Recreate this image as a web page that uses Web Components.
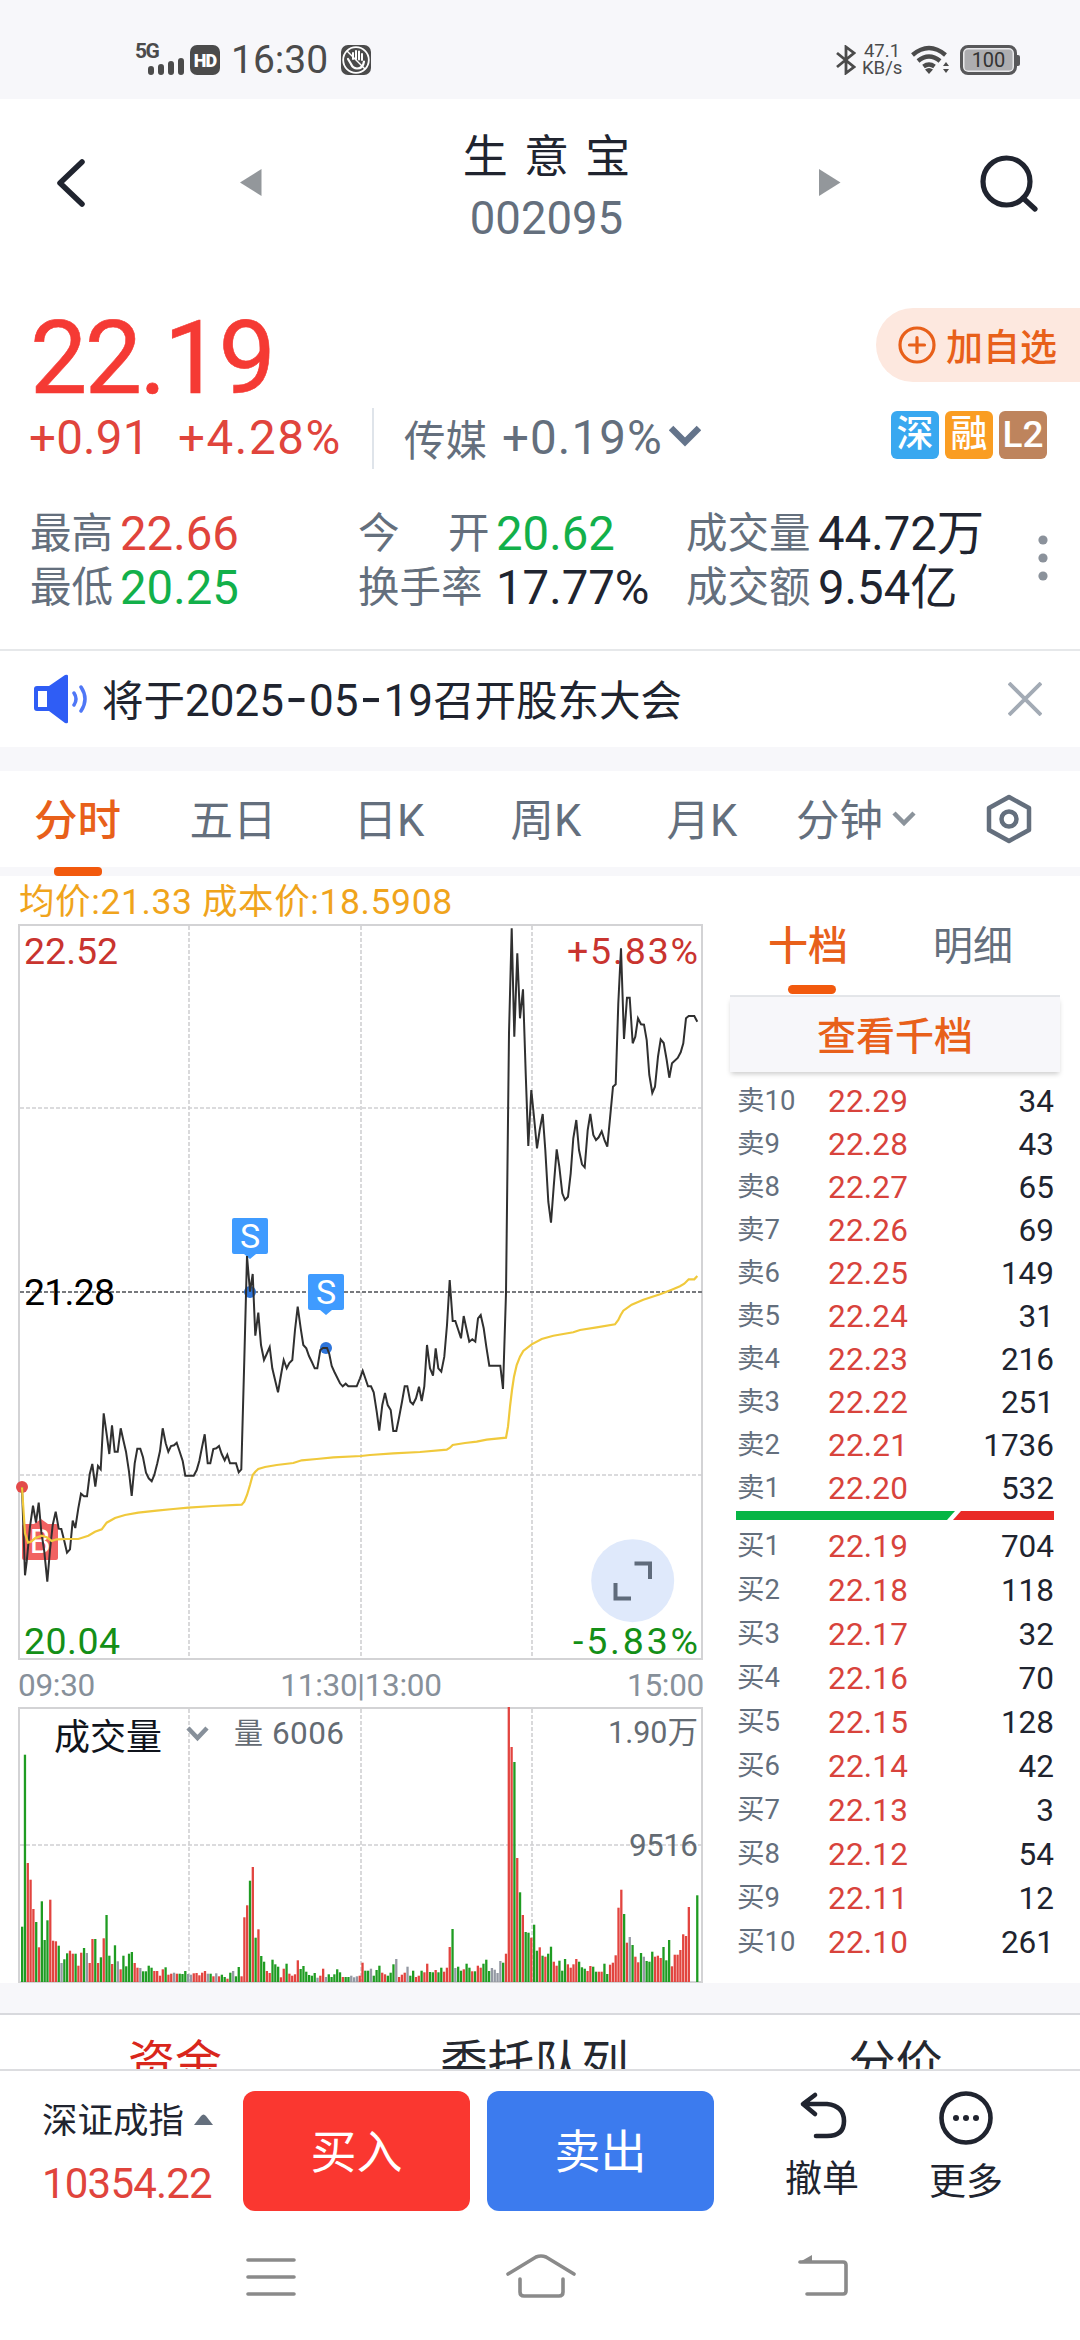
<!DOCTYPE html>
<html lang="zh-CN">
<head>
<meta charset="utf-8">
<title>生意宝 002095</title>
<style>
  body {
    margin: 0;
    width: 1080px;
    height: 2340px;
    overflow: hidden;
    background: #fff;
    font-family: Roboto, "Noto Sans CJK SC", sans-serif;
    color: #20242f;
  }
  stock-page {
    --red: #e0443c;
    --green: #12b04a;
    --orange: #e8601a;
    --gray: #646f7d;
    --band: #f7f7fa;
  }
</style>
</head>
<body>
<stock-page></stock-page>

<script>
class BaseElement extends HTMLElement {
  constructor() {
    super();
    this.attachShadow({ mode: 'open' });
  }

  connectedCallback() {
    this.shadowRoot.innerHTML = this.render();
  }
}

class StatusBar extends BaseElement {
  render() {
    return `
      <style>
        :host { display: flex; box-sizing: border-box; height: 99px; padding: 21px 60px 0 135px; align-items: center; background: var(--band); color: #4b4b4b; }
        svg { display: block; flex: none; }
        .net { width: 55px; height: 36px; }
        .net b { display: block; font-size: 21px; line-height: 18px; letter-spacing: -1.5px; }
        .net svg { margin: -3px 0 0 13px; }
        .hd { width: 30px; height: 30px; border-radius: 7px; background: #4b4b4b; color: #fff; font: 900 18px/31px Roboto; letter-spacing: -1px; text-align: center; }
        .time { margin-left: 11px; width: 97px; font-size: 39px; line-height: 40px; }
        .hand { margin-left: 13px; }
        .right { margin-left: auto; display: flex; align-items: center; }
        .rate { width: 40px; margin: 0 9px 0 6px; font-size: 18.500px; line-height: 17px; text-align: center; white-space: nowrap; }
        .battery { margin-left: 10px; width: 51px; height: 24px; border: 3px solid #58585a; border-radius: 8px; background: #adadb0; box-shadow: inset 0 0 0 1.5px #e8e8ea; color: #333; font-size: 20px; line-height: 25px; text-align: center; }
        .nub { width: 3px; height: 11px; border-radius: 0 2px 2px 0; background: #58585a; }
      </style>
      <div class="net"><b>5G</b>
        <svg width="37" height="18" viewBox="0 0 37 18" stroke="#4b4b4b" stroke-width="6" stroke-linecap="round">
          <path d="M3 12v3M13 10v5M23 7v8M33 4v11"/>
        </svg>
      </div>
      <div class="hd">HD</div>
      <div class="time">16:30</div>
      <svg class="hand" width="30" height="30" viewBox="0 0 30 30">
        <rect width="30" height="30" rx="7" fill="#4b4b4b"/>
        <circle cx="15" cy="15" r="12.800" fill="none" stroke="#fff" stroke-width="1.800"/>
        <path d="M12 8v6M15 6v8M18 6.500v8M21 9v6" stroke="#fff" stroke-width="2" stroke-linecap="round"/>
        <path d="M7 14l3 5q2 4.500 6 4.500 6 0 7-7" fill="none" stroke="#fff" stroke-width="2.200" stroke-linecap="round"/>
        <path d="M6 6l18 18" stroke="#fff" stroke-width="1.500"/>
      </svg>
      <div class="right">
        <svg width="20" height="30" viewBox="0 0 20 30" fill="none" stroke="#4b4b4b" stroke-width="2.800"><path d="M1 8l17 14-8 6V2l8 6L1 22"/></svg>
        <div class="rate">47.1<br>KB/s</div>
        <svg width="39" height="30" viewBox="0 0 39 30" fill="none" stroke="#4b4b4b" stroke-width="4.400">
          <path d="M1.500 10q16.500-14 33 0M7 16q11-9 22 0M12.500 21.500q5.500-4 11 0"/>
          <path d="M14 24.500l4 4.500 4-4.500q-4-3-8 0zM32 21h6l-3-4zM32 24h6l-3 4z" fill="#4b4b4b" stroke="none"/>
        </svg>
        <div class="battery">100</div><div class="nub"></div>
      </div>`;
  }
}

class TitleBar extends BaseElement {
  render() {
    return `
      <style>
        :host { display: grid; grid-template-columns: 220px 640px 220px; height: 196px; box-sizing: border-box; padding-top: 32px; }
        svg { display: block; }
        .side svg { margin-top: 24px; }
        .mid { display: flex; justify-content: space-between; padding: 0 19px 0 20px; }
        .mid > svg { margin-top: 38px; }
        .mid > div { padding-left: 12px; }
        .name { font-size: 45px; line-height: 53px; word-spacing: 5px; text-align: center; }
        .code { font-size: 45.500px; line-height: 60px; margin-top: 5px; text-align: center; color: var(--gray); }
      </style>
      <div class="side">
        <svg width="100" height="56" viewBox="0 0 100 56" fill="none" stroke="#20242f" stroke-width="5.500" stroke-linecap="round" stroke-linejoin="round"><path d="M82 7L60 28l22 21"/></svg>
      </div>
      <div class="mid">
        <svg width="22" height="28" fill="#93979b"><path d="M21.500 0v27L0 13.500z"/></svg>
        <div>
          <div class="name">生 意 宝</div>
          <div class="code">002095</div>
        </div>
        <svg width="22" height="28" fill="#93979b"><path d="M0 0v27l21.500-13.500z"/></svg>
      </div>
      <div class="side">
        <svg width="190" height="60" viewBox="0 0 190 60" fill="none" stroke="#20242f" stroke-width="5.200" stroke-linecap="round"><circle cx="146.500" cy="26.500" r="23.500"/><path d="M163 43l12 11"/></svg>
      </div>`;
  }
}

class QuoteHead extends BaseElement {
  render() {
    return `
      <style>
        :host { display: flex; justify-content: space-between; height: 203px; color: #e0443c; }
        .price { margin: 10px 0 0 30px; height: 103px; font-size: 102px; line-height: 106px; letter-spacing: -2.600px; color: #f53a34; -webkit-text-stroke: 0.6px #f53a34; }
        .row { display: flex; align-items: center; height: 60px; margin-left: 29px; white-space: pre; font-size: 47.500px; }
        .chg { width: 149px; letter-spacing: 0.200px; }
        .pct { width: 194px; letter-spacing: 1.600px; }
        .line { width: 2px; height: 61px; background: #dfe4ea; }
        .sector { margin-left: 30px; font-size: 41.500px; color: var(--gray); width: 98px; }
        .spct { color: var(--gray); width: 167px; letter-spacing: 1.100px; }
        .right { width: 204px; }
        .add { display: flex; align-items: center; box-sizing: border-box; height: 74px; margin-top: 13px; padding-left: 22px; border-radius: 37px 0 0 37px; background: #fde8df; color: var(--orange); font-size: 37px; font-weight: 500; }
        .add svg { margin-right: 10px; }
        .tags { display: flex; gap: 6px; margin: 29px 0 0 15px; }
        .tags span { width: 48px; height: 48px; border-radius: 6px; color: #fff; font-size: 37px; line-height: 48px; text-align: center; font-weight: 500; }
      </style>
      <div>
        <div class="price">22.19</div>
        <div class="row">
          <span class="chg">+0.91</span><span class="pct">+4.28%</span><i class="line"></i>
          <span class="sector">传媒</span><span class="spct">+0.19%</span>
          <svg width="32" height="22" style="margin-top:-5px" fill="none" stroke="#64748b" stroke-width="6.500"><path d="M2 3l14 14L30 3"/></svg>
        </div>
      </div>
      <div class="right">
        <div class="add">
          <svg width="38" height="38" fill="none" stroke="#e8601a" stroke-width="3.200" stroke-linecap="round"><circle cx="19" cy="19" r="17"/><path d="M11.500 19h15M19 11.500v15"/></svg>
          加自选
        </div>
        <div class="tags">
          <span style="background:#39a8f0">深</span><span style="background:#fa9d22">融</span><span style="background:#be845d">L2</span>
        </div>
      </div>`;
  }
}

class StatItem extends BaseElement {
  render() {
    return `
      <style>
        :host { display: flex; align-items: center; height: 54px; line-height: 54px; white-space: pre; }
        .label { width: var(--label-width); font-size: 41.500px; color: var(--gray); }
        .value { height: 54px; font-size: 47.300px; color: var(--tone, #20242f); }
      </style>
      <span class="label">${this.getAttribute('label')}</span>
      <span class="value"><slot></slot></span>`;
  }
}

class StatGrid extends BaseElement {
  render() {
    return `
      <style>
        :host { display: flex; height: 153px; padding-top: 9px; box-sizing: border-box; border-bottom: 2px solid #e6e8ea; }
        .grid { display: grid; grid-template-columns: 328px 328px 350px; grid-auto-rows: 54px; margin-left: 30px; }
        .a { --label-width: 90px; }
        .b { --label-width: 138px; }
        .c { --label-width: 132px; }
        .up { --tone: #e0443c; }
        .down { --tone: #12b04a; }
        .dots { margin: 28px 0 0 1px; }
      </style>
      <div class="grid">
        <stat-item class="a up" label="最高">22.66</stat-item>
        <stat-item class="b down" label="今　&#8198;开">20.62</stat-item>
        <stat-item class="c" label="成交量">44.72万</stat-item>
        <stat-item class="a down" label="最低">20.25</stat-item>
        <stat-item class="b" label="换手率">17.77%</stat-item>
        <stat-item class="c" label="成交额">9.54亿</stat-item>
      </div>
      <svg class="dots" width="12" height="50" fill="#8b929b"><circle cx="6" cy="5" r="4.600"/><circle cx="6" cy="23" r="4.600"/><circle cx="6" cy="41" r="4.600"/></svg>`;
  }
}

class NoticeBar extends BaseElement {
  render() {
    return `
      <style>
        :host { display: flex; align-items: center; height: 96px; padding: 0 38px 0 33px; border-bottom: 24px solid var(--band); }
        .text { flex: 1; margin-left: 12px; padding-top: 4px; font-size: 41.500px; line-height: 92px; white-space: nowrap; }
        .date { font-size: 44px; }
        .date i { font: 50px/20px Inter; padding: 0 1px; }
      </style>
      <svg width="57" height="50" viewBox="0 0 57 50">
        <path d="M1 15q0-3 3-3h12L32 1q3-1 3 1v46q0 2-3 1L16 37H4q-3 0-3-3z" fill="#2f5df5"/>
        <path d="M5 17h9v16H5z" fill="#fff"/>
        <path d="M41 19q4 6 0 12M48 13q8 12 0 24" fill="none" stroke="#4f77f6" stroke-width="3.500" stroke-linecap="round"/>
      </svg>
      <span class="text">将于<span class="date">2025<i>-</i>05<i>-</i>19</span>召开股东大会</span>
      <svg width="34" height="34" stroke="#a3abb5" stroke-width="3.800"><path d="M1 1l32 32M33 1L1 33"/></svg>`;
  }
}

class PeriodTabs extends BaseElement {
  render() {
    return `
      <style>
        :host { display: grid; grid-template-columns: 155px 156px 156px 158px 154px 112px auto; height: 96px; border-bottom: 9px solid var(--band); font-size: 43.500px; line-height: 101px; color: var(--gray); text-align: center; white-space: nowrap; }
        span { height: 96px; }
        .on { position: relative; color: var(--orange); font-weight: 500; }
        .on::after { content: ""; position: absolute; left: 54px; bottom: -9px; width: 48px; height: 9px; border-radius: 4px; background: #f2590d; }
        .last { display: flex; align-items: center; padding-left: 1px; }
        .last svg + svg { margin-left: 69px; }
      </style>
      <span class="on">分时</span><span>五日</span><span>日K</span><span>周K</span><span>月K</span>
      <span style="padding-left:9px">分钟</span>
      <span class="last">
        <svg width="24" height="18" fill="none" stroke="#8b939b" stroke-width="4.500"><path d="M2 3l10 10L22 3"/></svg>
        <svg width="48" height="50" fill="none" stroke="#646f7d" stroke-width="4.500" stroke-linejoin="round"><path d="M24 3l20 11v22L24 47 4 36V14z"/><circle cx="24" cy="25" r="7.500"/></svg>
      </span>`;
  }
}

// Points are stored at 3x, each run relative to its own origin
const PRICE = [
  [0, 1250, '66,712 75,976 80,935 90,830 99,767 108,818 116,758 124,845 133,905 142,995 150,900 158,825 167,785 176,836 184,837 193,873 201,908 210,898 218,812 226,834 235,775 243,731 252,739 261,739 269,673 277,642 286,710 294,648 302,658 311,490 319,545 328,612 336,526 344,605 353,605 362,535 370,570 378,605 387,665 395,738 404,640 412,596 421,596 429,622 438,668 446,685 455,694 463,675 472,640 480,603 488,535 497,580 505,605 513,588 522,586 530,578 539,605 548,633 556,677 581,677 590,660 598,633 606,592 614,553 623,640 631,640 640,597 649,595 657,588 665,612 674,631 682,614 690,640 708,640 716,667 724,658 733,330 741,18 750,125 758,72 766,257 775,188 783,285 792,330 800,312 809,291 817,355 826,393 834,427 843,375 851,330 860,355 868,339 877,330 885,240 893,170 902,235 910,285 919,295 927,318 936,337 944,355 952,355 961,300 969,294 981,294 988,312 995,348 1003,365 1020,400 1028,409 1037,401 1045,409'],
  [350, 1250, '0,409 20,409 30,385 38,362 46,385 54,409 63,409 71,427 80,485 88,542 97,465 105,429 113,465 122,480 130,543 139,543 147,503 156,455 164,409 172,409 181,455 189,463 198,445 207,410 215,453 223,409 231,285 240,355 249,377 257,295 265,355 274,365 283,320 291,225 299,90 308,213 316,213 325,240 333,265 341,198 350,240 358,275 367,268 376,275 384,205 392,195 401,235 409,290 418,347 451,347 459,417 468,130'],
  [350, 900, '470,1000 477,400 485,85 493,410 502,160 510,355 519,268 527,520 535,738 544,570 553,660 561,745 569,690 578,642 586,750 595,905 603,968 611,860 620,748 628,800 637,880 645,900 654,890 662,820 670,715 679,660 687,750 696,793 704,802 713,690 721,642 730,705 738,720 746,712 755,694 764,722 772,740 780,655 789,560 797,553 805,310 813,145 822,417 831,293 839,293 848,430 856,410 864,355 873,373 882,374 890,420 898,525 907,579 915,560 924,470 932,418 941,429 950,480 958,533 966,490 983,474 992,457 1000,430 1008,355 1016,348 1033,348 1042,365'],
];
const AVERAGE = [
  [0, 1250, '66,712 75,850 84,878 93,875 105,865 125,857 140,862 155,873 170,868 200,867 235,867 265,857 285,845 305,838 320,818 345,804 375,795 415,788 470,782 520,777 565,773 640,768 725,764 733,755 741,735 750,705 758,675 766,665 775,657 795,651 830,645 880,639 905,631 950,627 1000,622'],
  [350, 1250, '33,618 60,615 130,610 210,606 290,599 300,593 308,585 345,579 380,575 410,569 468,563 474,530 480,470 486,420 492,380 500,345 510,320 520,303 545,283 575,267 610,257 670,247 690,240 740,232 795,223 805,210 812,195 820,182 845,164 880,149 930,133 965,119 990,109 1003,101 1016,88 1033,88 1042,78'],
];

function toPoints(runs) {
  return runs.map(([ox, oy, pts]) => pts.split(' ').map(p => {
    const [x, y] = p.split(',').map(Number);
    return (ox + x / 3).toFixed(1) + ',' + (oy + y / 3).toFixed(1);
  }).join(' ')).join(' ');
}

class PriceChart extends BaseElement {
  render() {
    return `
      <style>
        :host { display: block; }
        .avg { height: 48px; padding-left: 19px; font-size: 35.500px; line-height: 53px; color: #f0a41c; white-space: nowrap; letter-spacing: 0.600px; }
        svg { display: block; margin-left: 18px; font-size: 37.500px; overflow: visible; }
        .grid { stroke: #d0d0d2; stroke-width: 1.600; stroke-dasharray: 4 2; fill: none; }
        .axis { display: flex; justify-content: space-between; box-sizing: border-box; height: 47px; width: 704px; padding-left: 18px; font-size: 31.500px; line-height: 52px; color: #87909a; letter-spacing: -0.3px; }
      </style>
      <div class="avg">均价:21.33 成本价:18.5908</div>
      <svg width="686" height="736" viewBox="18 924 686 736">
        <rect x="19" y="925" width="683" height="734" fill="none" stroke="#d3d3d5" stroke-width="2"/>
        <path class="grid" d="M189 926v732M361 926v732M532 926v732M20 1108h682M20 1475h682"/>
        <path d="M20 1292h682" stroke="#77797d" stroke-width="1.800" stroke-dasharray="4 2"/>
        <g fill="#c9342f"><text x="24" y="964">22.52</text><text x="567" y="964" textLength="131">+5.83%</text></g>
        <text x="24" y="1305" fill="#000" textLength="91">21.28</text>
        <g fill="#148f17"><text x="24" y="1654" textLength="96">20.04</text><text x="573" y="1654" textLength="125">-5.83%</text></g>
        <g fill="#3f9bff">
          <path d="M234 1218h32q2 0 2 2v32q0 2-2 2h-10l-6 5-6-5h-10q-2 0-2-2v-32q0-2 2-2z"/>
          <path d="M310 1274h32q2 0 2 2v32q0 2-2 2h-10l-6 5-6-5h-10q-2 0-2-2v-32q0-2 2-2z"/>
        </g>
        <path d="M24 1524h10l7-5 7 5h8q2 0 2 2v32q0 2-2 2H24q-2 0-2-2v-32q0-2 2-2z" fill="#f16262"/>
        <g fill="#fff" font-size="34" text-anchor="middle"><text x="250" y="1248">S</text><text x="326" y="1304">S</text><text x="40" y="1553">B</text></g>
        <g fill="#2e75db"><circle cx="250" cy="1292" r="6"/><circle cx="326" cy="1348" r="6"/></g>
        <circle cx="22" cy="1487" r="6" fill="#e34a4a"/>
        <polyline points="${toPoints(PRICE)}" fill="none" stroke="#303030" stroke-width="2"/>
        <polyline points="${toPoints(AVERAGE)}" fill="none" stroke="#f0c93c" stroke-width="2.200"/>
        <circle cx="632.700" cy="1580.700" r="41.500" fill="#dfe9fb"/>
        <path d="M634.500 1563.500h15.500v15.500M615.500 1583v15.500H631" fill="none" stroke="#5f6b7b" stroke-width="4"/>
      </svg>
      <div class="axis"><span>09:30</span><span>11:30|13:00</span><span>15:00</span></div>`;
  }
}

// One token per minute: top edge of the bar and its colour, "-" for the closing auction gap
const VOLUME = `801g 285g 610r 660r 748r 787g 863r 725g 841g 782g 720r 843r 845r 858g 910n 899g 881g 873r 882r 882g
  918r 879r 865g 880n 910r 838r 838g 910r 893g 836r 766g 888g 913r 857g 905n 929r 888g 920g 882g 877g
  910r 924r 925n 935g 935g 918g 924g 934r 934r 948r 929r 923g 945r 942r 939n 942r 942g 943g 934g 943n
  945n 941r 940r 947r 939r 934r 942n 942g 950r 941n 950r 945g 952g 957r 939g 934n 950g 922g 950r 773r
  737r 663g 622r 834g 809r 889g 906g 934r 940r 900g 914g 921g 953r 927r 912g 942r 948r 944r 902r 928g
  919g 936g 946g 948g 940g 954n 948r 927r 952n 944g 952g 944g 929g 938g 952r 952g 952g 948n 953n 950n
  948r 909r 933g 933g 927n 948g 931g 918g 939r 944r 948g 939g 914g 898n 952r 945r 939r 921n 948g 933g
  952r 948r 933g 938r 912r 937g 938g 931r 938g 924g 936r 924r 862r 808g 925n 921g 933g 929r 912g 924g
  935r 935g 918r 924r 912g 900g 934g 925n 930n 940n 904n 909g 882r 142r 262r 307g 595r 698g 766r 817g
  819g 834r 795g 873g 863r 888g 891r 882g 861g 906r 918r 903g 933g 898g 914r 924r 914r 898r 906g 923g
  927g 934r 919r 921g 936g 936r 936r 912g 943g 915r 909r 887r 744r 690r 763g 849r 832n 856g 891r 908r
  880g 891n 904g 906g 876g 891r 888r 895r 862g 902g 841g 920r 885r 885r 871r 824r 829r 742r - - 707g`;
const BAR_COLORS = { r: '#e2443f', g: '#1f9c22', n: '#9499a3' };

class VolumeChart extends BaseElement {
  render() {
    const bars = VOLUME.split(/\s+/).map((token, i) => {
      if (token === '-') return '';
      const top = (parseInt(token) - 142) / 3;
      return `<rect x="${(3 + i * 2.813).toFixed(2)}" y="${top.toFixed(1)}" width="2.3" height="${(275 - top).toFixed(1)}" fill="${BAR_COLORS[token.slice(-1)]}"/>`;
    }).join('');
    return `
      <style>
        :host { display: block; margin-left: 18px; }
        svg { display: block; font-size: 31.500px; }
        .grid { stroke: #d0d0d2; stroke-width: 1.600; stroke-dasharray: 4 2; }
      </style>
      <svg width="686" height="276" viewBox="0 0 686 276">
        <rect x="1" y="1" width="683" height="274" fill="none" stroke="#d3d3d5" stroke-width="2"/>
        <path class="grid" d="M171 2v272M343 2v272M514 2v272M2 138h682"/>
        ${bars}
        <text x="36" y="43" font-size="36" fill="#10141c">成交量</text>
        <path d="M170 21l9.500 10L189 21" fill="none" stroke="#87909a" stroke-width="4.500"/>
        <g fill="#646b73"><text x="216" y="37" font-size="29">量</text><text x="254" y="37" textLength="72">6006</text>
        <text x="680" y="36" text-anchor="end" font-size="30.500">1.90万</text><text x="680" y="149" text-anchor="end" textLength="69">9516</text></g>
      </svg>`;
  }
}

class OrderRow extends BaseElement {
  render() {
    return `
      <style>
        :host { display: grid; grid-template-columns: 91px 1fr auto; align-items: center; height: var(--row); padding: 0 6px 0 7px; font-size: 31.500px; line-height: 36px; }
        .side { font-size: 27.500px; line-height: 34px; padding-bottom: 2px; color: var(--gray); }
        .price { color: #d8433c; letter-spacing: 0.2px; }
      </style>
      <span class="side">${this.getAttribute('side')}</span>
      <span class="price">${this.getAttribute('price')}</span>
      <span>${this.getAttribute('volume')}</span>`;
  }
}

class OrderBook extends BaseElement {
  rows(name, start, volumes, step) {
    return volumes.map((v, i) => {
      const level = step < 0 ? 10 - i : i + 1;
      return `<order-row side="${name}${level}" price="${(start - i * 0.01).toFixed(2)}" volume="${v}"></order-row>`;
    }).join('');
  }

  render() {
    return `
      <style>
        :host { display: block; width: 330px; padding-right: 20px; }
        .tabs { display: grid; grid-template-columns: 1fr 1fr; height: 119px; border-bottom: 2px solid #e4e6ea; font-size: 40px; line-height: 141px; color: var(--gray); }
        .tabs span { position: relative; height: 119px; padding-left: 38px; }
        .tabs .on { color: var(--orange); font-weight: 500; }
        .on::after { content: ""; position: absolute; left: 58px; bottom: 1px; width: 48px; height: 9px; border-radius: 5px; background: #f2590d; }
        .more { height: 75px; margin-bottom: 8px; background: var(--band); box-shadow: 0 3px 5px -1px #ccc; color: var(--orange); font-size: 39px; font-weight: 500; line-height: 80px; text-align: center; }
        .sell { --row: 43px; }
        .buy { --row: 44px; }
        .ratio { display: block; margin: 1px 0 5px 6px; }
      </style>
      <div class="tabs"><span class="on">十档</span><span>明细</span></div>
      <div class="more">查看千档</div>
      <div class="sell">${this.rows('卖', 22.29, [34, 43, 65, 69, 149, 31, 216, 251, 1736, 532], -1)}</div>
      <svg class="ratio" width="318" height="9"><path d="M0 0h219l-8 9H0z" fill="#06b545"/><path d="M225 0h93v9H217z" fill="#e92a26"/></svg>
      <div class="buy">${this.rows('买', 22.19, [704, 118, 32, 70, 128, 42, 3, 54, 12, 261], 1)}</div>`;
  }
}

class SubTabs extends BaseElement {
  render() {
    return `
      <style>
        :host { display: grid; grid-template-columns: 350px 369px 353px; height: 56px; box-sizing: border-box; overflow: hidden; font-size: 47px; line-height: 95px; text-align: center; border-top: 2px solid #d8d9dd; color: #25282f; }
        .on { color: #d9261c; }
      </style>
      <span class="on">资金</span><span>委托队列</span><span>分价</span>`;
  }
}

class TradeBar extends BaseElement {
  render() {
    return `
      <style>
        :host { display: flex; height: 170px; padding: 20px 0 0 42px; box-sizing: border-box; border-top: 2px solid #dcdde0; background: #fff; }
        .index { width: 201px; font-size: 35.500px; line-height: 61px; white-space: nowrap; }
        .index svg { margin: 0 0 8px 10px; }
        .index div { margin-top: 1px; font-size: 42px; line-height: 62px; letter-spacing: -0.800px; color: var(--red); }
        .btn { width: 227px; height: 120px; margin-right: 17px; border-radius: 12px; color: #fff; font-size: 46px; line-height: 123px; text-align: center; }
        .act { width: 144px; text-align: center; font-size: 37px; }
        .act svg { display: block; margin: 0 auto; }
        .act div { line-height: 50px; }
      </style>
      <div class="index">深证成指<svg width="19" height="11" fill="#646f7d"><path d="M0 11L7 2q2.500-3 5 0l7 9z"/></svg><div>10354.22</div></div>
      <div class="btn" style="background:#fa3730">买入</div>
      <div class="btn" style="background:#3c7bee">卖出</div>
      <div class="act" style="margin-left:19px">
        <svg width="50" height="55" fill="none" stroke="#20242f" stroke-width="4.600" stroke-linecap="round" stroke-linejoin="round"><path d="M18 4L6 13l12 10M7 13h23q17 2 17 17 0 15-17 15H19"/></svg>
        <div style="margin-top:9px">撤单</div>
      </div>
      <div class="act">
        <svg width="56" height="55" fill="none" stroke="#20242f" stroke-width="4.600"><circle cx="28" cy="27" r="24.500"/><g fill="#20242f" stroke="none"><circle cx="18" cy="27" r="3"/><circle cx="28" cy="27" r="3"/><circle cx="38" cy="27" r="3"/></g></svg>
        <div style="margin-top:12px">更多</div>
      </div>`;
  }
}

class NavBar extends BaseElement {
  render() {
    return `
      <style>
        :host { display: flex; height: 101px; padding: 13px 0 0 244px; box-sizing: border-box; }
        svg { display: block; fill: none; stroke: #8a8a8a; stroke-width: 3.600; stroke-linecap: round; stroke-linejoin: round; }
      </style>
      <svg width="54" height="48"><path d="M4 8h46M4 25h46M4 42h46"/></svg>
      <svg width="74" height="48" style="margin:0 218px 0 206px"><path d="M4 22L32 5q5-2 10 0l28 17M16 27v13q0 4 4 4h35q4 0 4-4V27"/></svg>
      <svg width="54" height="48"><path d="M4 10h43q3 0 3 3v26q0 3-3 3H11"/><path d="M2 11L16 3v8z" fill="#8a8a8a" stroke="none"/></svg>`;
  }
}

class StockPage extends BaseElement {
  render() {
    return `
      <style>
        :host { display: block; }
        .charts { display: flex; justify-content: space-between; height: 1107px; border-bottom: 30px solid var(--band); }
      </style>
      <status-bar></status-bar>
      <title-bar></title-bar>
      <quote-head></quote-head>
      <stat-grid></stat-grid>
      <notice-bar></notice-bar>
      <period-tabs></period-tabs>
      <div class="charts">
        <div><price-chart></price-chart><volume-chart></volume-chart></div>
        <order-book></order-book>
      </div>
      <sub-tabs></sub-tabs>
      <trade-bar></trade-bar>
      <nav-bar></nav-bar>`;
  }
}

customElements.define('status-bar', StatusBar);
customElements.define('title-bar', TitleBar);
customElements.define('quote-head', QuoteHead);
customElements.define('stat-item', StatItem);
customElements.define('stat-grid', StatGrid);
customElements.define('notice-bar', NoticeBar);
customElements.define('period-tabs', PeriodTabs);
customElements.define('price-chart', PriceChart);
customElements.define('volume-chart', VolumeChart);
customElements.define('order-row', OrderRow);
customElements.define('order-book', OrderBook);
customElements.define('sub-tabs', SubTabs);
customElements.define('trade-bar', TradeBar);
customElements.define('nav-bar', NavBar);
customElements.define('stock-page', StockPage);
</script>
</body>
</html>
